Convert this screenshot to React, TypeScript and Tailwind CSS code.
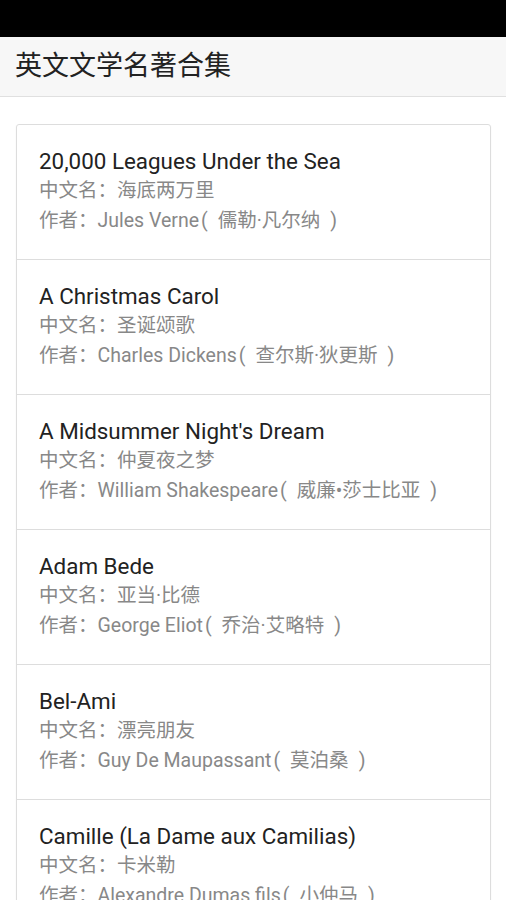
const books = [
    { title: '20,000 Leagues Under the Sea', cn: '海底两万里', author: 'Jules Verne', authorCn: '儒勒·凡尔纳' },
    { title: 'A Christmas Carol', cn: '圣诞颂歌', author: 'Charles Dickens', authorCn: '查尔斯·狄更斯' },
    { title: "A Midsummer Night's Dream", cn: '仲夏夜之梦', author: 'William Shakespeare', authorCn: '威廉•莎士比亚' },
    { title: 'Adam Bede', cn: '亚当·比德', author: 'George Eliot', authorCn: '乔治·艾略特' },
    { title: 'Bel-Ami', cn: '漂亮朋友', author: 'Guy De Maupassant', authorCn: '莫泊桑' },
    { title: 'Camille (La Dame aux Camilias)', cn: '卡米勒', author: 'Alexandre Dumas fils', authorCn: '小仲马' },
];

export default function App() {
    return (
        <div className="h-[900px] overflow-hidden bg-white" style={{ fontFamily: 'Roboto, "Noto Sans CJK SC", sans-serif' }}>
            <div className="h-[37px] bg-black" />
            <header className="h-[60px] flex items-center px-[15px] bg-[#f7f7f7] border-b border-[#e0e0e0]">
                <h1 className="text-[27px] text-[#222]">英文文学名著合集</h1>
            </header>
            <div className="pl-4 pr-[15px] pt-[27px]">
                <div className="border border-[#dddddd] rounded-[3px] shadow-[0_1px_2px_rgba(0,0,0,0.05)]">
                    {books.map((b, i) => (
                        <div key={i} className={`px-[22px] pt-[21px] pb-[23px] ${i > 0 ? 'border-t border-[#dddddd]' : ''}`}>
                            <div className="text-[22.4px] leading-[30px] text-[#222]">{b.title}</div>
                            <div className="text-[19.5px] leading-[30px] text-[#888]">中文名：{b.cn}</div>
                            <div className="text-[19.5px] leading-[30px] text-[#888] whitespace-nowrap">
                                作者：{b.author}
                                <span className="ml-[2px]">(</span>
                                <span className="ml-[10px]">{b.authorCn}</span>
                                <span className="ml-[10px]">)</span>
                            </div>
                        </div>
                    ))}
                </div>
            </div>
        </div>
    );
}
